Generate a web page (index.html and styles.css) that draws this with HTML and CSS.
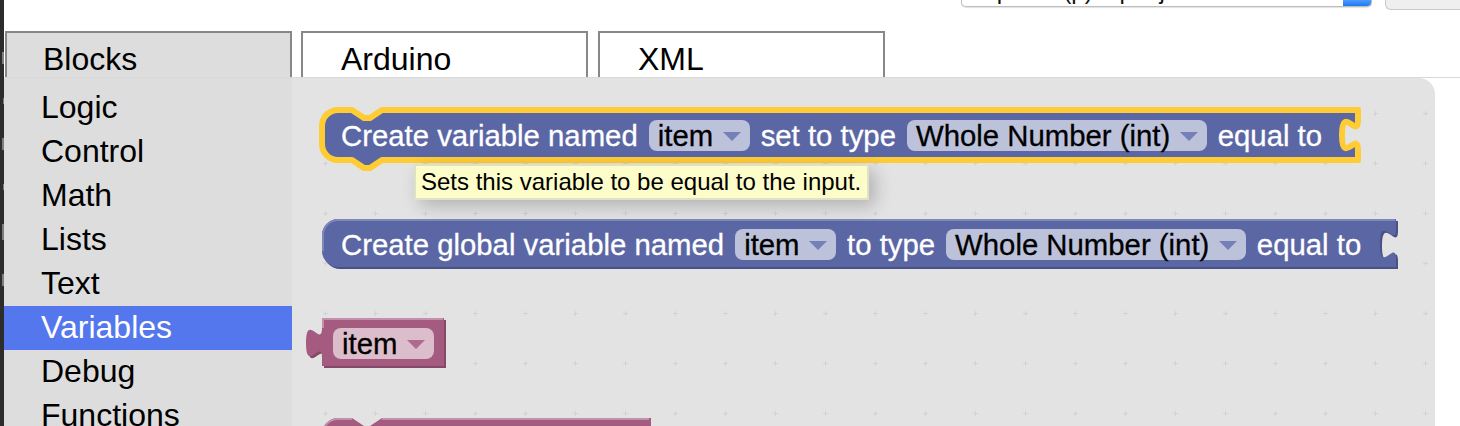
FILE: index.html
```html
<!DOCTYPE html>
<html>
<head>
<meta charset="utf-8">
<title>Blocks</title>
<link rel="stylesheet" href="styles.css">
</head>
<body>
<div class="app">
  <div class="edge">
    <span class="edge-mark m1"></span>
    <span class="edge-mark m2"></span>
    <span class="edge-mark m3"></span>
    <span class="edge-mark m4"></span>
    <span class="edge-mark m5"></span>
    <span class="edge-mark m6"></span>
  </div>
  <div class="main">
    <div class="topbar">
      <div class="urlbox">
        <span class="urltext">~ p&nbsp;&nbsp;&nbsp;&nbsp;&nbsp;&nbsp;&nbsp;&nbsp;(p)&nbsp;&nbsp;&nbsp;&nbsp;p&nbsp;&nbsp;&nbsp;&nbsp;j</span>
        <span class="urlbtn"></span>
      </div>
      <div class="topbtn"></div>
    </div>
    <div class="tabs">
      <div class="tab tab-active">Blocks</div>
      <div class="tab">Arduino</div>
      <div class="tab tab-xml">XML</div>
    </div>
    <div class="content">
      <ul class="toolbox">
        <li>Logic</li>
        <li>Control</li>
        <li>Math</li>
        <li>Lists</li>
        <li>Text</li>
        <li class="sel">Variables</li>
        <li>Debug</li>
        <li>Functions</li>
      </ul>
      <div class="flyout">
        <svg class="grid" width="1143" height="348">
          <defs>
            <pattern id="gridpat" x="8" y="10" width="50" height="50" patternUnits="userSpaceOnUse">
              <rect x="23" y="25" width="5" height="1" fill="#d3d3d3"/>
              <rect x="25" y="23" width="1" height="5" fill="#d3d3d3"/>
            </pattern>
          </defs>
          <rect width="1143" height="348" fill="url(#gridpat)"/>
        </svg>

        <div class="block b1">
          <svg class="shape" width="1036" height="50">
            <path d="M0,16 A16,16 0 0 1 16,0 H30 l12,8 6,0 12,-8 H1036 v10 c0,20 -16,-16 -16,15 s16,-5 16,15 V50 H60 l-12,8 -6,0 -12,-8 H16 A16,16 0 0 1 0,34 Z" fill="#5b67a5" stroke="#ffcc33" stroke-width="6" stroke-linejoin="round"/>
          </svg>
          <div class="row">
            <span class="lbl">Create variable named</span>
            <span class="dd">item<svg class="arr" width="18" height="10"><polygon points="0,0 18,0 9,9"/></svg></span>
            <span class="lbl">set to type</span>
            <span class="dd">Whole Number (int)<svg class="arr" width="18" height="10"><polygon points="0,0 18,0 9,9"/></svg></span>
            <span class="lbl">equal to</span>
          </div>
        </div>

        <div class="block b2">
          <svg class="shape" width="1076" height="50">
            <path transform="translate(2,2)" d="M0,16 A16,16 0 0 1 16,0 H1074 v10 c0,20 -16,-16 -16,15 s16,-5 16,15 V48 H16 A16,16 0 0 1 0,32 Z" fill="#495284"/>
            <path d="M0,16 A16,16 0 0 1 16,0 H1074 v10 c0,20 -16,-16 -16,15 s16,-5 16,15 V48 H16 A16,16 0 0 1 0,32 Z" fill="#5b67a5"/>
            <path d="M1,32 V16 A15,15 0 0 1 16,1 H1073" fill="none" stroke="#8088bb" stroke-width="2"/>
          </svg>
          <div class="row">
            <span class="lbl">Create global variable named</span>
            <span class="dd">item<svg class="arr" width="18" height="10"><polygon points="0,0 18,0 9,9"/></svg></span>
            <span class="lbl">to type</span>
            <span class="dd">Whole Number (int)<svg class="arr" width="18" height="10"><polygon points="0,0 18,0 9,9"/></svg></span>
            <span class="lbl">equal to</span>
          </div>
        </div>

        <div class="block b3">
          <svg class="shape" width="124" height="50">
            <path transform="translate(2,2)" d="M0,0 H122 V48 H0 V40 c0,-20 -16,16 -16,-15 s16,5 16,-15 Z" fill="#844966"/>
            <path d="M0,0 H122 V48 H0 V40 c0,-20 -16,16 -16,-15 s16,5 16,-15 Z" fill="#a55b80"/>
            <path d="M1,10 V1 H121" fill="none" stroke="#c390a9" stroke-width="2"/>
          </svg>
          <div class="row row-var">
            <span class="dd dd-var">item<svg class="arr" width="18" height="10"><polygon points="0,0 18,0 9,9"/></svg></span>
          </div>
        </div>

        <div class="block b4">
          <svg class="shape" width="329" height="50">
            <path d="M0,16 A16,16 0 0 1 16,0 H30 l12,8 6,0 12,-8 H329 V50 H16 A16,16 0 0 1 0,34 Z" fill="#a55b80"/>
            <path d="M1,34 V16 A15,15 0 0 1 16,1 H30 M60,1 H327" fill="none" stroke="#c390a9" stroke-width="2"/>
          </svg>
        </div>

        <div class="tooltip">Sets this variable to be equal to the input.</div>
      </div>
    </div>
  </div>
</div>
</body>
</html>
```

FILE: styles.css
```css
* {
  box-sizing: border-box;
  margin: 0;
  padding: 0;
}

html,
body {
  width: 1460px;
  height: 426px;
  overflow: hidden;
  background: #ffffff;
}

body {
  font-family: "Liberation Sans", Arial, Helvetica, sans-serif;
  color: #000;
}

.app {
  display: flex;
  height: 426px;
}

/* dark strip at the very left (neighbouring window) */
.edge {
  width: 4px;
  flex: none;
  background: #2c2c2c;
  display: flex;
  flex-direction: column;
  align-items: flex-end;
  padding-top: 52px;
  gap: 34px;
}

.edge-mark {
  display: block;
  width: 2px;
  height: 12px;
  background: #7d7d7d;
}

.m2,
.m4 {
  height: 6px;
  width: 1px;
}

.m5 {
  height: 16px;
}

.main {
  flex: 1;
  min-width: 0;
  display: flex;
  flex-direction: column;
}

/* top bar with cut-off field and button */
.topbar {
  height: 31px;
  flex: none;
  display: flex;
  justify-content: flex-end;
  align-items: flex-start;
}

.urlbox {
  width: 411px;
  height: 7px;
  margin-right: 13px;
  display: flex;
  overflow: hidden;
  background: #fff;
  border: 1px solid #bdbdbd;
  border-top: none;
  border-radius: 0 0 5px 5px;
  box-shadow: 0 1px 1px rgba(0, 0, 0, 0.12);
}

.urltext {
  display: block;
  margin-top: -22px;
  padding-left: 14px;
  font-size: 24px;
  line-height: 26px;
  color: #111;
  white-space: nowrap;
}

.urlbtn {
  margin-left: auto;
  width: 28px;
  flex: none;
  background: linear-gradient(#4b9cfb, #1f78f2);
}

.topbtn {
  width: 75px;
  height: 10px;
  background: #efefef;
  border: 1px solid #c9c9c9;
  border-top: none;
  border-right: none;
  border-radius: 0 0 0 6px;
}

/* tabs */
.tabs {
  height: 46px;
  flex: none;
  display: flex;
  gap: 9px;
  padding-left: 1px;
}

.tab {
  width: 287px;
  height: 46px;
  background: #fff;
  border: 2px solid #888;
  border-bottom: none;
  font-size: 32px;
  line-height: 36px;
  padding: 8px 0 0 38px;
}

.tab-active {
  background: #ddd;
  padding-left: 36px;
}

.tab-xml {
  margin-left: 1px;
}

/* content area */
.content {
  flex: 1;
  min-height: 0;
  display: flex;
  border-top: 1px solid #d9d9d9;
}

.toolbox {
  width: 288px;
  flex: none;
  background: #ddd;
  list-style: none;
  padding-top: 8px;
}

.toolbox li {
  height: 44px;
  line-height: 42px;
  font-size: 32px;
  padding-left: 37px;
  white-space: nowrap;
}

.toolbox li.sel {
  background: #5577ee;
  color: #fff;
}

.flyout {
  width: 1143px;
  flex: none;
  position: relative;
  overflow: hidden;
  background: #e3e3e3;
  border-top-right-radius: 16px;
}

.grid {
  position: absolute;
  left: 0;
  top: 0;
}

/* blocks on the canvas */
.block {
  position: absolute;
  height: 50px;
}

.b1 {
  left: 30px;
  top: 32px;
  width: 1036px;
}

.b2 {
  left: 30px;
  top: 141px;
  width: 1076px;
}

.b3 {
  left: 30px;
  top: 240px;
  width: 124px;
}

.b4 {
  left: 30px;
  top: 340px;
  width: 329px;
}

.shape {
  position: absolute;
  left: 0;
  top: 0;
  overflow: visible;
}

.row {
  position: relative;
  display: flex;
  align-items: center;
  height: 50px;
  gap: 11px;
  padding-left: 19px;
  font-size: 29.33px;
  line-height: 31px;
  color: #fff;
  white-space: nowrap;
  -webkit-text-stroke: 0.3px #fff;
}

.row-var {
  padding-left: 11px;
}

.dd {
  display: flex;
  align-items: center;
  height: 31px;
  padding: 0 9px;
  border-radius: 8px;
  background: #bdc2db;
  color: #000;
  -webkit-text-stroke: 0.3px #000;
}

.arr {
  flex: none;
  margin-left: 9.5px;
  margin-top: 3px;
  fill: #7580b8;
}

.dd-var {
  background: #dbbdcc;
}

.dd-var .arr {
  fill: #b06a8e;
}

/* tooltip */
.tooltip {
  position: absolute;
  left: 122px;
  top: 86px;
  background: #fdfdc9;
  border: 2px solid #e0e0c6;
  padding: 4px 6px 4px 5px;
  font-size: 24px;
  line-height: 24px;
  color: #000;
  white-space: nowrap;
  box-shadow: 6px 6px 18px rgba(0, 0, 0, 0.22);
}
```
